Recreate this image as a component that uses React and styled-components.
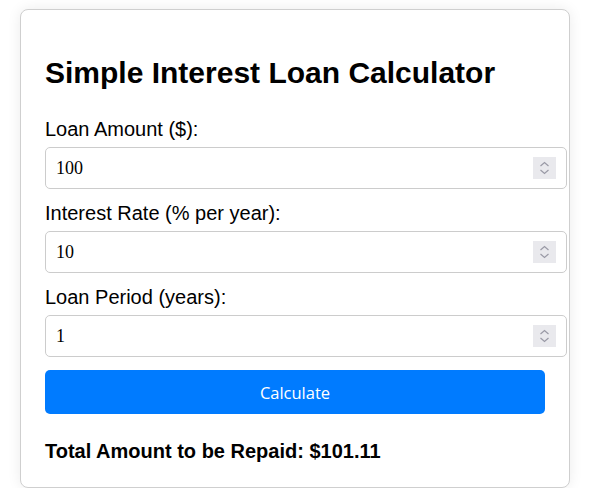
import { useState } from 'react';
import styled, { createGlobalStyle } from 'styled-components';

const GlobalStyle = createGlobalStyle`
    html, body {
        margin: 0;
        padding: 0;
        background: #fff;
    }
    body {
        font-family: "Liberation Sans", Arial, sans-serif;
        color: #000;
    }
`;

const Card = styled.div`
    width: 500px;
    margin: 9px 0 0 20px;
    padding: 24px;
    border: 1px solid #cfcfcf;
    border-radius: 8px;
    background: #fff;
    box-shadow: 0 0 14px rgba(0, 0, 0, 0.08);
`;

const Titulo = styled.h2`
    font-size: 30px;
    font-weight: 700;
    margin: 22px 0 28px;
    line-height: normal;
`;

const Rotulo = styled.label`
    display: block;
    font-size: 20px;
    line-height: 23px;
    margin-bottom: 6px;
`;

const Campo = styled.div`
    position: relative;
    margin-bottom: 13px;
`;

const Entrada = styled.input`
    display: block;
    width: 100%;
    height: 20px;
    padding: 10px;
    border: 1px solid #cccccc;
    border-radius: 5px;
    font-family: "Liberation Serif", "Times New Roman", serif;
    font-size: 18px;
    color: #000;
    outline: none;
`;

const Spinner = styled.span`
    position: absolute;
    top: 10px;
    left: 488px;
    width: 23px;
    height: 22px;
    background: #e9e9ed;
    display: flex;
    align-items: center;
    justify-content: center;
    pointer-events: none;
`;

const Botao = styled.button`
    display: block;
    width: 100%;
    height: 44px;
    border: none;
    border-radius: 5px;
    background: #007bff;
    color: #fff;
    font-family: "Open Sans", "Noto Sans", sans-serif;
    font-size: 16.5px;
    cursor: pointer;
`;

const Resultado = styled.div`
    margin-top: 26px;
    font-size: 20px;
    font-weight: 700;
    line-height: 23px;
`;

function Setas() {
    return (
        <Spinner>
            <svg width="13" height="16" viewBox="0 0 13 16" fill="none" stroke="#9a9aa6" strokeWidth="1.2">
                <polyline points="2.5,6 6.5,2.5 10.5,6" />
                <polyline points="2.5,10 6.5,13.5 10.5,10" />
            </svg>
        </Spinner>
    );
}

function CampoNumero({ id, rotulo, valor, onChange }) {
    return (
        <>
            <Rotulo htmlFor={id}>{rotulo}</Rotulo>
            <Campo>
                <Entrada id={id} type="text" value={valor} onChange={e => onChange(e.target.value)} />
                <Setas />
            </Campo>
        </>
    );
}

export default function App() {
    const [valor, setValor] = useState('100');
    const [taxa, setTaxa] = useState('10');
    const [periodo, setPeriodo] = useState('1');
    const [total, setTotal] = useState('101.11');

    function calcular() {
        const p = parseFloat(valor) || 0;
        const r = (parseFloat(taxa) || 0) / 100;
        const t = parseFloat(periodo) || 0;
        setTotal((p + p * r * t).toFixed(2));
    }

    return (
        <>
            <GlobalStyle />
            <Card>
                <Titulo>Simple Interest Loan Calculator</Titulo>
                <CampoNumero id="valor" rotulo="Loan Amount ($):" valor={valor} onChange={setValor} />
                <CampoNumero id="taxa" rotulo="Interest Rate (% per year):" valor={taxa} onChange={setTaxa} />
                <CampoNumero id="periodo" rotulo="Loan Period (years):" valor={periodo} onChange={setPeriodo} />
                <Botao type="button" onClick={calcular}>Calculate</Botao>
                <Resultado>Total Amount to be Repaid: ${total}</Resultado>
            </Card>
        </>
    );
}
